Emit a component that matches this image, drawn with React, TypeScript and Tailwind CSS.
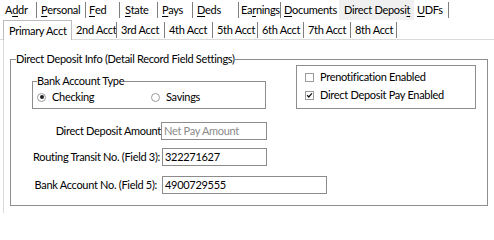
import type { ReactNode } from "react";

type Tab = { pre: string; key: string; post: string; w: string; pl: string; active?: boolean };

const mainTabs: Tab[] = [
  { pre: "A", key: "d", post: "dr", w: "w-[36px]", pl: "pl-[5px]" },
  { pre: "", key: "P", post: "ersonal", w: "w-[48px]", pl: "pl-[4px]" },
  { pre: "", key: "F", post: "ed", w: "w-[33px]", pl: "pl-[3px]" },
  { pre: "", key: "S", post: "tate", w: "w-[37px]", pl: "pl-[5px]" },
  { pre: "", key: "P", post: "ays", w: "w-[34px]", pl: "pl-[4px]" },
  { pre: "", key: "D", post: "eds", w: "w-[45px]", pl: "pl-[4px]" },
  { pre: "Ea", key: "r", post: "nings", w: "w-[41px]", pl: "pl-[2px]" },
  { pre: "", key: "D", post: "ocuments", w: "w-[58px]", pl: "pl-[3px]" },
  { pre: "Direct Deposi", key: "t", post: "", w: "w-[75px]", pl: "pl-[5px]", active: true },
  { pre: "", key: "U", post: "DFs", w: "w-[34px]", pl: "pl-[3px]" },
];

const acctTabs = [
  { label: "2nd Acct", w: "w-[44px]" },
  { label: "3rd Acct", w: "w-[47px]" },
  { label: "4th Acct", w: "w-[47px]" },
  { label: "5th Acct", w: "w-[44px]" },
  { label: "6th Acct", w: "w-[45px]" },
  { label: "7th Acct", w: "w-[46px]" },
  { label: "8th Acct", w: "w-[45px]" },
];

function Sep() {
  return <span className="h-[16px] w-px shrink-0 bg-[#7f7f7f]" />;
}

function Radio({ checked, children }: { checked?: boolean; children: ReactNode }) {
  return (
    <label className="flex items-center gap-[6px]">
      <span className="flex h-[9px] w-[9px] items-center justify-center rounded-full border border-[#9a9a9a] bg-white">
        {checked && <span className="h-[4px] w-[4px] rounded-full bg-[#222]" />}
      </span>
      {children}
    </label>
  );
}

function Check({ checked, children }: { checked?: boolean; children: ReactNode }) {
  return (
    <label className="flex h-[18px] items-center gap-[6px]">
      <span className="flex h-[9px] w-[9px] items-center justify-center border border-[#9a9a9a] bg-white">
        {checked && (
          <svg viewBox="0 0 9 9" className="h-[9px] w-[9px]">
            <path d="M1.5 4.2 L3.6 6.4 L7.6 1.8" fill="none" stroke="#111" strokeWidth="1.6" />
          </svg>
        )}
      </span>
      {children}
    </label>
  );
}

function Field({ label, value, placeholder, lw, ml, iw }: { label: string; value?: string; placeholder?: string; lw: string; ml: string; iw: string }) {
  return (
    <div className="flex items-center">
      <span className={`${lw} shrink-0 whitespace-nowrap text-right`}>{label}</span>
      <div className={`${ml} ${iw} flex h-[18px] shrink-0 items-center border border-[#8c8c8c] bg-white pl-[2px]`}>
        {value ? <span>{value}</span> : <span className="text-[#8a8a8a]">{placeholder}</span>}
      </div>
    </div>
  );
}

export default function App() {
  return (
    <div className="h-[213px] w-[494px] overflow-hidden bg-white text-[11px] leading-[16px] tracking-[-0.3px] text-black [font-family:Lato,sans-serif]">
      {/* main tab strip */}
      <div className="flex h-[20px] items-center">
        {mainTabs.map((t, i) => (
          <div key={i} className="flex h-full items-center">
            <div className={`${t.w} ${t.pl} flex h-full items-center whitespace-nowrap ${t.active ? "bg-[#f0f0f0]" : ""}`}>
              {t.pre}
              <span className="underline underline-offset-2">{t.key}</span>
              {t.post}
            </div>
            {!t.active && i !== 7 && <Sep />}
          </div>
        ))}
      </div>

      {/* account tab strip */}
      <div className="flex h-[20px] items-stretch border-b border-[#dadada]">
        <div className="ml-[3px] -mb-px flex w-[69px] items-center whitespace-nowrap border border-b-0 border-[#bdbdbd] bg-white pl-[5px]">
          Primary Acct
        </div>
        {acctTabs.map((t) => (
          <div key={t.label} className="flex items-center">
            <div className={`${t.w} flex h-full items-center whitespace-nowrap pl-[4px]`}>{t.label}</div>
            <Sep />
          </div>
        ))}
      </div>

      {/* tab page */}
      <div className="ml-[3px] h-[173px] border-l border-[#dadada] pl-[6px] pt-[11px]">
        <fieldset className="h-[155px] w-[478px] border border-[#8e8e8e] px-0 pb-0">
          <legend className="ml-[5px] px-0">Direct Deposit Info (Detail Record Field Settings)</legend>

          <div className="-mt-[2px] flex items-end">
            <fieldset className="ml-[21px] h-[36px] w-[234px] border border-[#8e8e8e] px-0">
              <legend className="ml-[4px] px-0">Bank Account Type</legend>
              <div className="flex pl-[4px]">
                <div className="w-[114px]">
                  <Radio checked>Checking</Radio>
                </div>
                <Radio>Savings</Radio>
              </div>
            </fieldset>
            <div className="ml-[30px] flex h-[44px] w-[180px] flex-col justify-center border border-[#8e8e8e] pb-[2px] pl-[8px]">
              <Check>Prenotification Enabled</Check>
              <Check checked>Direct Deposit Pay Enabled</Check>
            </div>
          </div>

          <div className="mt-[13px] flex flex-col gap-[8px]">
            <Field label="Direct Deposit Amount" placeholder="Net Pay Amount" lw="w-[150px]" ml="ml-0" iw="w-[106px]" />
            <Field label="Routing Transit No. (Field 3):" value="322271627" lw="w-[149px]" ml="ml-[2px]" iw="w-[105px]" />
            <div className="mt-[2px]">
              <Field label="Bank Account No. (Field 5):" value="4900729555" lw="w-[146px]" ml="ml-[5px]" iw="w-[165px]" />
            </div>
          </div>
        </fieldset>
      </div>
    </div>
  );
}
